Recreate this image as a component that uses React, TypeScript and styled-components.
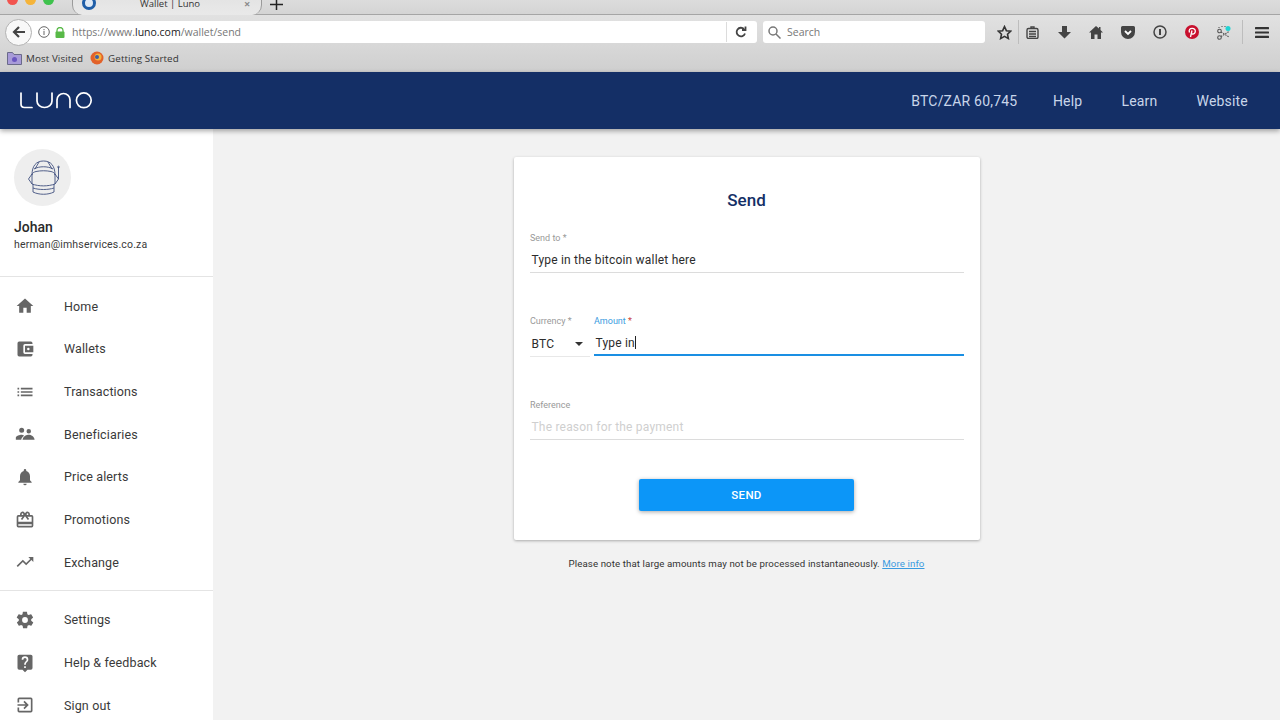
import React from "react";
import styled, { createGlobalStyle } from "styled-components";

const GlobalStyle = createGlobalStyle`
	html, body {
		margin: 0;
		padding: 0;
		width: 1280px;
		height: 720px;
		overflow: hidden;
		background: #f2f2f2;
		font-family: Roboto, "Liberation Sans", sans-serif;
	}
	* {
		box-sizing: border-box;
	}
`;

const Page = styled.div`
	width: 1280px;
	height: 720px;
	display: flex;
	flex-direction: column;
	overflow: hidden;
`;

const Chrome = styled.div`
	height: 72px;
	flex: none;
	display: flex;
	flex-direction: column;
	background: linear-gradient(#e6e6e6, #cfcfcf);
	font-family: "Open Sans", "Liberation Sans", sans-serif;
`;

const TabStrip = styled.div`
	height: 15px;
	flex: none;
	display: flex;
	align-items: flex-end;
	border-bottom: 1px solid #a5a5a5;
	background: linear-gradient(#dcdcdc, #d4d4d4);
	position: relative;
`;

const Lights = styled.div`
	display: flex;
	gap: 7px;
	width: 72px;
	padding-left: 7px;
	height: 14px;
`;

const Light = styled.span<{ $color: string }>`
	width: 11px;
	height: 11px;
	margin-top: -6px;
	border-radius: 50%;
	background: ${(p) => p.$color};
`;

const Tab = styled.div`
	width: 190px;
	height: 15px;
	margin-bottom: -1px;
	display: flex;
	align-items: flex-start;
	background: linear-gradient(#e4e4e4, #e9e9e9);
	border-right: 1px solid #9a9a9a;
	border-left: 1px solid #9a9a9a;
	border-bottom-left-radius: 10px;
	border-bottom-right-radius: 10px;
	font-size: 9.5px;
	color: #333;
	padding-left: 9px;
	line-height: 7px;
`;

const TabIcon = styled.span`
	width: 14px;
	height: 14px;
	margin-top: -4px;
	border-radius: 50%;
	border: 3px solid #1f5ea8;
	background: #dfe9f5;
	flex: none;
`;

const TabTitle = styled.span`
	width: 144px;
	text-align: center;
	margin-top: 0;
	padding-left: 4px;
	flex: none;
`;

const TabClose = styled.span`
	color: #8a8a8a;
	font-size: 11px;
	font-weight: 700;
	margin-top: 0;
	margin-left: 4px;
`;

const NewTab = styled.span`
	margin-left: 8px;
	height: 14px;
	color: #222;
	display: flex;
	align-items: flex-start;
`;

const NavBar = styled.div`
	height: 34px;
	flex: none;
	display: flex;
	align-items: center;
	padding-left: 5px;
	position: relative;
`;

const BackButton = styled.div`
	width: 27px;
	height: 27px;
	flex: none;
	border-radius: 50%;
	background: #f8f8f8;
	border: 1px solid #b2b2b2;
	display: flex;
	align-items: center;
	justify-content: center;
	z-index: 1;
`;

const UrlBar = styled.div`
	width: 731px;
	height: 22px;
	flex: none;
	margin-left: -6px;
	padding-left: 12px;
	background: #fff;
	border-radius: 0 3px 3px 0;
	display: flex;
	align-items: center;
	font-size: 10.5px;
	color: #777;
	gap: 5px;
`;

const UrlText = styled.span`
	margin-left: 2px;
	width: 649px;
	flex: none;
	white-space: nowrap;
	b {
		font-weight: 400;
		color: #222;
	}
`;

const UrlDivider = styled.span`
	width: 1px;
	height: 20px;
	background: #dcdcdc;
	flex: none;
`;

const Reload = styled.span`
	margin-left: 3px;
	display: flex;
`;

const SearchBox = styled.div`
	width: 222px;
	height: 22px;
	flex: none;
	margin-left: 6px;
	background: #fff;
	border-radius: 3px;
	display: flex;
	align-items: center;
	gap: 6px;
	padding-left: 5px;
	font-size: 10.5px;
	color: #777;
`;

const ToolIcons = styled.div`
	display: flex;
	align-items: center;
	margin-left: 12px;
	flex: none;
`;

const ToolSlot = styled.span`
	width: 32px;
	height: 24px;
	display: flex;
	align-items: center;
	justify-content: center;
`;

const ClipSlot = styled(ToolSlot)`
	width: 30px;
	padding-right: 3px;
	border-left: 1px solid #bdbdbd;
`;

const MenuSlot = styled(ToolSlot)`
	width: 38px;
	margin-left: 2px;
	border-left: 1px solid #bdbdbd;
`;

const StarSlot = styled.span`
	width: 22px;
	height: 24px;
	display: flex;
	align-items: center;
	justify-content: flex-start;
	margin-right: -1px;
`;

const Bookmarks = styled.div`
	height: 23px;
	flex: none;
	display: flex;
	align-items: center;
	padding: 0 0 5px 7px;
	font-size: 9.8px;
	color: #333;
	letter-spacing: 0.1px;
`;

const Bookmark = styled.span`
	display: flex;
	align-items: center;
	gap: 4px;
	margin-right: 7px;
`;

const Header = styled.header`
	height: 57px;
	flex: none;
	background: #142f66;
	display: flex;
	align-items: center;
	justify-content: space-between;
	padding: 0 32px 0 20px;
	box-shadow: 0 2px 5px rgba(0, 0, 0, 0.35);
	position: relative;
	z-index: 2;
`;

const HeaderLinks = styled.nav`
	display: flex;
	gap: 39px;
	font-size: 14px;
	letter-spacing: 0.2px;
	color: #c9d6ea;
	span:first-child {
		margin-right: -3.5px;
	}
`;

const Body = styled.div`
	flex: 1;
	display: flex;
	min-height: 0;
`;

const Sidebar = styled.aside`
	width: 213px;
	flex: none;
	background: #fff;
	display: flex;
	flex-direction: column;
`;

const Profile = styled.div`
	height: 148px;
	flex: none;
	padding: 20px 14px 0;
	border-bottom: 1px solid #e4e4e4;
`;

const Avatar = styled.div`
	width: 57px;
	height: 57px;
	border-radius: 50%;
	background: #eeeeee;
	display: flex;
	align-items: center;
	justify-content: center;
`;

const UserName = styled.div`
	margin-top: 13px;
	font-size: 14px;
	font-weight: 500;
	line-height: 16px;
	color: #2a2a2a;
`;

const UserEmail = styled.div`
	margin-top: 3px;
	font-size: 10.5px;
	line-height: 14px;
	letter-spacing: 0.17px;
	color: #3a3a3a;
`;

const Menu = styled.div<{ $divider?: boolean }>`
	flex: none;
	display: flex;
	flex-direction: column;
	padding: ${(p) => (p.$divider ? "8px 0 6.5px" : "7.5px 0")};
	border-bottom: ${(p) => (p.$divider ? "1px solid #e4e4e4" : "none")};
`;

const MenuItem = styled.div`
	height: 42.67px;
	display: flex;
	align-items: center;
	padding-left: 15px;
	font-size: 12.5px;
	letter-spacing: 0.13px;
	color: #3a3a3a;
	svg {
		width: 20px;
		height: 20px;
		fill: #666;
		flex: none;
		margin-right: 29px;
	}
`;

const Main = styled.main`
	flex: 1;
	display: flex;
	flex-direction: column;
	align-items: center;
	padding-top: 28px;
	padding-left: 1px;
`;

const Card = styled.section`
	width: 466px;
	height: 383px;
	flex: none;
	background: #fff;
	border-radius: 2px;
	box-shadow: 0 1px 3px rgba(0, 0, 0, 0.3);
	padding: 0 16px;
	display: flex;
	flex-direction: column;
`;

const Title = styled.h1`
	margin: 32px 0 0;
	padding-right: 1px;
	font-size: 17px;
	line-height: 22px;
	font-weight: 500;
	text-align: center;
	color: #142f66;
`;

const Field = styled.div<{ $active?: boolean; $grow?: boolean }>`
	flex: ${(p) => (p.$grow ? "1" : "none")};
	height: 40px;
	border-bottom: ${(p) => (p.$active ? "2px solid #1a8fe3" : "1px solid #dcdcdc")};
`;

const CurrencyField = styled(Field)`
	width: 60px;
	height: 41px;
	border-bottom-color: #e8e8e8;
`;

const FieldLabel = styled.div<{ $active?: boolean }>`
	font-size: 9px;
	line-height: 11px;
	color: ${(p) => (p.$active ? "#3a9be0" : "#999")};
	span {
		color: ${(p) => (p.$active ? "#c8423c" : "#999")};
	}
`;

const FieldValue = styled.div<{ $muted?: boolean }>`
	margin-top: 7px;
	padding-left: 1.5px;
	font-size: 12px;
	line-height: 18px;
	letter-spacing: 0.2px;
	color: ${(p) => (p.$muted ? "#cfcfcf" : "#2c2c2c")};
	display: flex;
	align-items: center;
	justify-content: space-between;
`;

const CurrencyValue = styled(FieldValue)`
	margin-top: 8px;
`;

const Caret = styled.span`
	width: 1px;
	height: 13px;
	background: #222;
	display: inline-block;
	vertical-align: -2px;
`;

const Arrow = styled.span`
	width: 0;
	height: 0;
	margin-right: 7px;
	border-left: 4px solid transparent;
	border-right: 4px solid transparent;
	border-top: 4px solid #333;
`;

const SendToRow = styled.div`
	margin-top: 22px;
`;

const AmountRow = styled.div`
	margin-top: 43px;
	display: flex;
	gap: 4px;
`;

const ReferenceRow = styled.div`
	margin-top: 43px;
`;

const SendButton = styled.button`
	width: 215px;
	height: 32px;
	margin: 39px 0 0 109px;
	border: 0;
	border-radius: 2px;
	background: #0c96f8;
	color: #fff;
	font-family: inherit;
	font-size: 11.5px;
	font-weight: 500;
	letter-spacing: 0.3px;
	box-shadow: 0 1px 4px rgba(0, 0, 0, 0.35);
`;

const Note = styled.p`
	margin: 17px 1px 0 0;
	font-size: 9.7px;
	line-height: 14px;
	letter-spacing: 0.1px;
	color: #333;
	a {
		color: #3a9be0;
		text-decoration: underline;
	}
`;

const menuTop = [
	{ label: "Home", d: "M10 20v-6h4v6h5v-8h3L12 3 2 12h3v8z" },
	{
		label: "Wallets",
		d: "M21 18v1a2 2 0 0 1-2 2H5a2 2 0 0 1-2-2V5a2 2 0 0 1 2-2h14a2 2 0 0 1 2 2v1h-9a2 2 0 0 0-2 2v8a2 2 0 0 0 2 2h9zm-9-2h10V8H12v8zm4-2.500a1.500 1.500 0 1 1 0-3 1.500 1.500 0 0 1 0 3z",
	},
	{
		label: "Transactions",
		d: "M3 13h2v-2H3v2zm0 4h2v-2H3v2zm0-8h2V7H3v2zm4 4h14v-2H7v2zm0 4h14v-2H7v2zM7 7v2h14V7H7z",
	},
	{
		label: "Beneficiaries",
		d: "M16.500 11.500a2.700 2.700 0 1 0 0-5.400 2.700 2.700 0 0 0 0 5.400zm-8.500-1a3 3 0 1 0 0-6 3 3 0 0 0 0 6zm0 2.500c-2.300 0-7 1.200-7 3.500V19h6.500c.2-2 1.800-3.600 3.500-4.800-1-.7-2-1.200-3-1.200zm8.500 0c-2.400 0-6.500 1.300-7.500 6h14.500c0-3.800-4.500-6-7-6z",
	},
	{
		label: "Price alerts",
		d: "M12 22a2 2 0 0 0 2-2h-4a2 2 0 0 0 2 2zm6-6v-5c0-3.100-1.600-5.600-4.500-6.300V4a1.500 1.500 0 0 0-3 0v.7C7.600 5.400 6 7.900 6 11v5l-2 2v1h16v-1l-2-2z",
	},
	{
		label: "Promotions",
		d: "M20 6h-2.200c.1-.3.200-.7.200-1a3 3 0 0 0-5.500-1.700L12 4l-.5-.7A3 3 0 0 0 6 5c0 .3.100.7.200 1H4a2 2 0 0 0-2 2v11a2 2 0 0 0 2 2h16a2 2 0 0 0 2-2V8a2 2 0 0 0-2-2zm-5-2a1 1 0 1 1 0 2 1 1 0 0 1 0-2zM9 4a1 1 0 1 1 0 2 1 1 0 0 1 0-2zm11 15H4v-2h16v2zm0-5H4V8h5.100L7 10.800 8.600 12 12 7.400 15.400 12l1.600-1.200L14.900 8H20v6z",
	},
	{
		label: "Exchange",
		d: "M16 6l2.300 2.300-4.900 4.900-4-4L2 16.600 3.400 18l6-6 4 4 6.300-6.300L22 12V6z",
	},
];

const menuBottom = [
	{
		label: "Settings",
		d: "M19.400 13c0-.3.100-.6.100-1s0-.7-.1-1l2.100-1.600c.2-.2.200-.4.100-.6l-2-3.500c-.1-.2-.4-.3-.6-.2l-2.500 1c-.5-.4-1.100-.7-1.700-1l-.4-2.700c0-.2-.2-.4-.5-.4h-4c-.3 0-.5.2-.5.400l-.4 2.700c-.6.300-1.200.6-1.700 1l-2.500-1c-.2-.1-.5 0-.6.200l-2 3.500c-.1.200-.1.400.1.600L4.600 11c0 .3-.1.600-.1 1s0 .7.1 1l-2.100 1.600c-.2.200-.2.400-.1.600l2 3.500c.1.200.4.300.6.200l2.500-1c.5.400 1.100.7 1.700 1l.4 2.700c0 .2.2.4.5.4h4c.3 0 .5-.2.500-.4l.4-2.700c.6-.3 1.200-.6 1.700-1l2.500 1c.2.100.5 0 .6-.2l2-3.500c.1-.2.100-.4-.1-.6L19.400 13zM12 15.500a3.500 3.500 0 1 1 0-7 3.500 3.500 0 0 1 0 7z",
	},
	{
		label: "Help & feedback",
		d: "M19 2H5a2 2 0 0 0-2 2v14a2 2 0 0 0 2 2h4l3 3 3-3h4a2 2 0 0 0 2-2V4a2 2 0 0 0-2-2zm-6 16h-2v-2h2v2zm2.100-7.700l-.9.900c-.8.700-1.200 1.300-1.200 2.800h-2v-.5c0-1.100.4-2.100 1.200-2.800l1.200-1.300c.4-.3.600-.8.600-1.400a2 2 0 0 0-4 0H8a4 4 0 0 1 8 0c0 .9-.4 1.700-.9 2.300z",
	},
	{
		label: "Sign out",
		d: "M10.100 15.600l1.400 1.400 5-5-5-5-1.400 1.400 2.600 2.600H3v2h9.700l-2.600 2.600zM19 3H5a2 2 0 0 0-2 2v4h2V5h14v14H5v-4H3v4a2 2 0 0 0 2 2h14a2 2 0 0 0 2-2V5a2 2 0 0 0-2-2z",
	},
];

function LunoLogo() {
	return (
		<svg width="73" height="17" viewBox="0 0 73 17" fill="none" stroke="#fff" strokeWidth="1.700" strokeLinecap="round">
			<path d="M1 1v11q0 3.500 3.500 3.500H12" />
			<path d="M17 1v8a7.500 6.500 0 0 0 15 0V1" />
			<path d="M37 15.500V8a6.500 6.500 0 0 1 13 0v7.500" />
			<circle cx="63.800" cy="8.300" r="7.400" />
		</svg>
	);
}

function Helmet() {
	return (
		<svg width="36" height="36" viewBox="0 0 36 36" fill="none" stroke="#41507f" strokeWidth="0.900">
			<path d="M7 15C7 6 11 1 18.500 1S30 6 30 15" />
			<path d="M9 9c5-3 14-3 19 0" />
			<path d="M14 2l-4 7M23 2l4 7" />
			<path d="M7 15c0-2 2-3 4-3.500 5-1 10-1 15 0 2 .5 4 1.500 4 3.500v9c-7 2.500-16 2.500-23 0z" />
			<path d="M8 24v8c6 3 15 3 21 0v-8" />
			<path d="M8 28c6 2 15 2 21 0" />
			<path d="M7 14l-3.500 5L7 24M30 14l3.500 5L30 24" />
			<path d="M33.500 7v12" />
			<circle cx="33.500" cy="7" r="0.800" />
		</svg>
	);
}

export default function App() {
	return (
		<Page>
			<GlobalStyle />
			<Chrome>
				<TabStrip>
					<Lights>
						<Light $color="#f2544f" />
						<Light $color="#f5b43a" />
						<Light $color="#3fc24d" />
					</Lights>
					<Tab>
						<TabIcon />
						<TabTitle>Wallet | Luno</TabTitle>
						<TabClose>×</TabClose>
					</Tab>
					<NewTab>
						<svg width="13" height="10" viewBox="0 0 13 10" stroke="#222" strokeWidth="1.500">
							<path d="M6.500 0v10M0 4.500h13" />
						</svg>
					</NewTab>
				</TabStrip>
				<NavBar>
					<BackButton>
						<svg width="14" height="14" viewBox="0 0 14 14" fill="none" stroke="#444" strokeWidth="2.200">
							<path d="M13 7H2M7 2L2 7l5 5" />
						</svg>
					</BackButton>
					<UrlBar>
						<svg width="12" height="12" viewBox="0 0 12 12" fill="none" stroke="#666">
							<circle cx="6" cy="6" r="5.300" />
							<path d="M6 5v4M6 3v1.200" />
						</svg>
						<svg width="10" height="11" viewBox="0 0 10 11">
							<path d="M2 5V3.500a3 3 0 0 1 6 0V5" fill="none" stroke="#58b947" strokeWidth="1.300" />
							<rect x="0.500" y="4.500" width="9" height="6.500" rx="1" fill="#58b947" />
						</svg>
						<UrlText>
							https://www.<b>luno.com</b>/wallet/send
						</UrlText>
						<UrlDivider />
						<Reload>
							<svg width="12" height="12" viewBox="0 0 12 12" fill="none" stroke="#444" strokeWidth="1.800">
								<path d="M10 7.500A4.300 4.300 0 1 1 9 3" />
								<path d="M10.500 0.500v3.500H7" />
							</svg>
						</Reload>
					</UrlBar>
					<SearchBox>
						<svg width="13" height="13" viewBox="0 0 13 13" fill="none" stroke="#777" strokeWidth="1.500">
							<circle cx="5" cy="5" r="4" />
							<path d="M8 8l4.500 4.500" />
						</svg>
						Search
					</SearchBox>
					<ToolIcons>
						<StarSlot>
							<svg width="15" height="15" viewBox="0 0 24 24" fill="none" stroke="#333" strokeWidth="2.500">
								<path d="M12 2.500l3 6.600 7 .8-5.200 4.800 1.400 7L12 18.200l-6.200 3.500 1.400-7L2 9.900l7-.8z" />
							</svg>
						</StarSlot>
						<ClipSlot>
							<svg width="13" height="13" viewBox="0 0 13 13" fill="none" stroke="#444" strokeWidth="1.400">
								<rect x="1" y="2.500" width="11" height="10" rx="1.500" />
								<path d="M3 5.500h7M3 8h7M3 10.500h7M5 2.500V1h3v1.500" />
							</svg>
						</ClipSlot>
						<ToolSlot>
							<svg width="13" height="13" viewBox="0 0 13 13" fill="#444">
								<path d="M4 0h5v6h4l-6.500 6.500L0 6h4z" />
							</svg>
						</ToolSlot>
						<ToolSlot>
							<svg width="14" height="13" viewBox="0 0 14 13" fill="#444">
								<path d="M7 0L0 6.500h2V13h3.500V8.500h3V13H12V6.500h2L11.500 4V1H10v1.500z" />
							</svg>
						</ToolSlot>
						<ToolSlot>
							<svg width="14" height="13" viewBox="0 0 14 13">
								<path d="M1.500 0h11A1.500 1.500 0 0 1 14 1.500V6A7 7 0 0 1 0 6V1.500A1.500 1.500 0 0 1 1.500 0z" fill="#444" />
								<path d="M4 5l3 3 3-3" fill="none" stroke="#fff" strokeWidth="1.800" />
							</svg>
						</ToolSlot>
						<ToolSlot>
							<svg width="14" height="14" viewBox="0 0 14 14" fill="none" stroke="#444" strokeWidth="1.500">
								<circle cx="7" cy="7" r="6" />
								<path d="M7 4v6" strokeWidth="2" />
							</svg>
						</ToolSlot>
						<ToolSlot>
							<svg width="14" height="14" viewBox="0 0 14 14">
								<circle cx="7" cy="7" r="7" fill="#c8102e" />
								<path d="M5.500 12L7 5.500M4.500 7.500C3.500 5 5 3.300 7.200 3.300c2 0 3.300 1.300 3.100 3-.2 1.900-1.500 3-2.900 2.700-.5-.1-.9-.4-1-.8" fill="none" stroke="#fff" strokeWidth="1.300" />
							</svg>
						</ToolSlot>
						<ToolSlot>
							<svg width="15" height="15" viewBox="0 0 15 15" fill="none" stroke="#555" strokeWidth="1.100">
								<circle cx="2.500" cy="12.500" r="1.800" />
								<circle cx="2.500" cy="6" r="1.800" />
								<path d="M4 11.500l8-5M4 7l8 5" strokeDasharray="1.500 1" />
								<path d="M5 1v1M8 1v1M2 2v1" />
								<circle cx="11" cy="3.500" r="2.500" fill="#22d3d3" stroke="none" />
							</svg>
						</ToolSlot>
						<MenuSlot>
							<svg width="14" height="11" viewBox="0 0 14 11" fill="#333">
								<rect width="14" height="2.200" rx="0.500" />
								<rect y="4.400" width="14" height="2.200" rx="0.500" />
								<rect y="8.800" width="14" height="2.200" rx="0.500" />
							</svg>
						</MenuSlot>
					</ToolIcons>
				</NavBar>
				<Bookmarks>
					<Bookmark>
						<svg width="15" height="14" viewBox="0 0 15 14">
							<path d="M0.500 1.500h5l1.500 2h7.500v10H.5z" fill="#a89bd8" stroke="#6a6a8a" />
							<circle cx="7.500" cy="8.500" r="2.500" fill="#6a56c0" />
						</svg>
						Most Visited
					</Bookmark>
					<Bookmark>
						<svg width="14" height="14" viewBox="0 0 14 14">
							<circle cx="7" cy="7" r="6.500" fill="#e2622a" />
							<circle cx="8" cy="6" r="3.500" fill="#f4b23e" />
							<circle cx="7" cy="6" r="2" fill="#3a5fa8" />
						</svg>
						Getting Started
					</Bookmark>
				</Bookmarks>
			</Chrome>
			<Header>
				<LunoLogo />
				<HeaderLinks>
					<span>BTC/ZAR 60,745</span>
					<span>Help</span>
					<span>Learn</span>
					<span>Website</span>
				</HeaderLinks>
			</Header>
			<Body>
				<Sidebar>
					<Profile>
						<Avatar>
							<Helmet />
						</Avatar>
						<UserName>Johan</UserName>
						<UserEmail>herman@imhservices.co.za</UserEmail>
					</Profile>
					<Menu $divider>
						{menuTop.map((item) => (
							<MenuItem key={item.label}>
								<svg viewBox="0 0 24 24">
									<path d={item.d} />
								</svg>
								{item.label}
							</MenuItem>
						))}
					</Menu>
					<Menu>
						{menuBottom.map((item) => (
							<MenuItem key={item.label}>
								<svg viewBox="0 0 24 24">
									<path d={item.d} />
								</svg>
								{item.label}
							</MenuItem>
						))}
					</Menu>
				</Sidebar>
				<Main>
					<Card>
						<Title>Send</Title>
						<SendToRow>
							<Field>
								<FieldLabel>
									Send to <span>*</span>
								</FieldLabel>
								<FieldValue>Type in the bitcoin wallet here</FieldValue>
							</Field>
						</SendToRow>
						<AmountRow>
							<CurrencyField>
								<FieldLabel>
									Currency <span>*</span>
								</FieldLabel>
								<CurrencyValue>
									BTC
									<Arrow />
								</CurrencyValue>
							</CurrencyField>
							<Field $grow $active>
								<FieldLabel $active>
									Amount <span>*</span>
								</FieldLabel>
								<FieldValue>
									<span>
										Type in
										<Caret />
									</span>
								</FieldValue>
							</Field>
						</AmountRow>
						<ReferenceRow>
							<Field>
								<FieldLabel>Reference</FieldLabel>
								<FieldValue $muted>The reason for the payment</FieldValue>
							</Field>
						</ReferenceRow>
						<SendButton>SEND</SendButton>
					</Card>
					<Note>
						Please note that large amounts may not be processed instantaneously. <a>More info</a>
					</Note>
				</Main>
			</Body>
		</Page>
	);
}
